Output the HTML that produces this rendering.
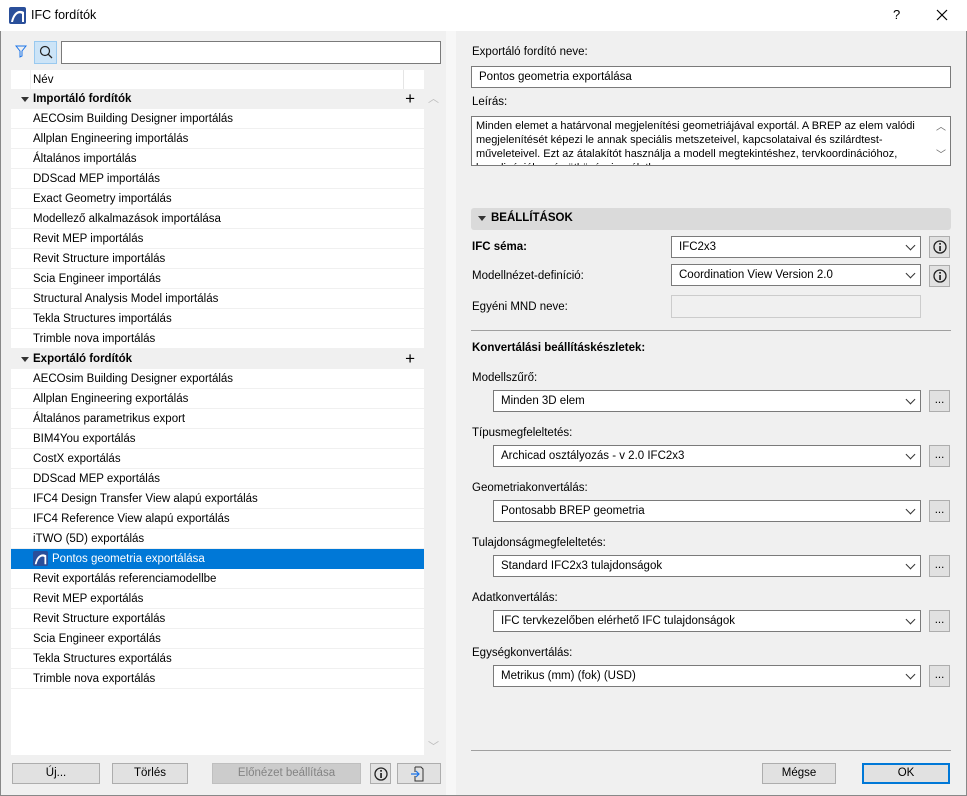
<!DOCTYPE html>
<html><head><meta charset="utf-8"><style>
*{box-sizing:border-box;margin:0;padding:0}
body{width:967px;height:796px;overflow:hidden;background:#f0f0f0;font-family:"Liberation Sans",sans-serif;font-size:11.5px;color:#000;position:relative}
.a{position:absolute}
.t{white-space:nowrap}
.row{position:absolute;left:11px;width:413px;height:20px;line-height:21px;padding-left:22px;border-bottom:1px solid #f0f0f0;white-space:nowrap}
.hdr{background:#f0f0f0;font-weight:bold;padding-left:22px}
.sel{background:#0078d7;color:#fff}
.box{position:absolute;background:#fff;border:1px solid #7a7a7a;height:22px;line-height:21px;padding-left:7px;white-space:nowrap}
.dd::after{content:"";position:absolute;right:6px;top:5px;width:6px;height:6px;border-right:1px solid #333;border-bottom:1px solid #333;transform:rotate(45deg)}
.btn{position:absolute;background:#e1e1e1;border:1px solid #adadad;height:21px;line-height:19px;text-align:center;white-space:nowrap}
.info{position:absolute;width:21px;height:22px;background:#e1e1e1;border:1px solid #adadad}
.info svg{position:absolute;left:3px;top:3px}
.plus{position:absolute;right:9px;top:3px;font-size:17px;font-weight:normal;line-height:14px}
.tri{display:inline-block;width:0;height:0;border-left:4px solid transparent;border-right:4px solid transparent;border-top:5px solid #333;position:absolute;left:10px;top:8px}
</style></head><body>
<div class="a" style="left:0;top:0;width:967px;height:31px;background:#fff"></div>
<svg class="a" style="left:9px;top:7px" width="17" height="17" viewBox="0 0 17 17"><rect width="17" height="17" rx="2" fill="#2a4f9a"/><path d="M2 15 C4 5 10 2 15 5 L15 15 L13 15 L13 7 C10 5 6 7 4 15Z" fill="#fff"/></svg>
<div class="a t" style="left:31px;top:8px;font-size:12.5px">IFC fordítók</div>
<div class="a t" style="left:893px;top:7px;font-size:13px">?</div>
<svg class="a" style="left:936px;top:9px" width="12" height="12"><path d="M1 1L11 11M11 1L1 11" stroke="#000" stroke-width="1.2"/></svg>
<div class="a" style="left:0;top:31px;width:1px;height:765px;background:#888"></div>
<div class="a" style="left:966px;top:31px;width:1px;height:765px;background:#888"></div>

<svg class="a" style="left:15px;top:45px" width="12" height="13"><path d="M1 1H11L7 6V11L5 12V6Z" fill="none" stroke="#1a73e8" stroke-width="1"/></svg>
<div class="a" style="left:34px;top:41px;width:23px;height:23px;background:#cce4f7;border:1px solid #99c9ef"></div>
<svg class="a" style="left:38px;top:44px" width="16" height="16"><circle cx="7" cy="7" r="4.5" fill="none" stroke="#222" stroke-width="1.2"/><path d="M10.3 10.3L14 14" stroke="#222" stroke-width="1.3"/></svg>
<div class="a" style="left:61px;top:41px;width:380px;height:23px;background:#fff;border:1px solid #7a7a7a"></div>

<div class="a" style="left:11px;top:70px;width:413px;height:685px;background:#fff"></div>
<div class="a" style="left:424px;top:70px;width:17px;height:685px;background:#f0f0f0"></div>
<div class="row" style="top:70px;padding-left:22px;border-bottom:none">Név</div>
<div class="a" style="left:30px;top:70px;width:1px;height:19px;background:#f0f0f0"></div>
<div class="a" style="left:403px;top:70px;width:1px;height:19px;background:#e5e5e5"></div>
<div class="a t" style="left:428px;top:90px;color:#bbb;font-size:11px">︿</div>
<div class="a t" style="left:428px;top:738px;color:#bbb;font-size:11px">﹀</div>

<div class="row hdr" style="top:89px"><span class="tri"></span>Importáló fordítók<span class="plus">+</span></div>
<div class="row" style="top:109px">AECOsim Building Designer importálás</div>
<div class="row" style="top:129px">Allplan Engineering importálás</div>
<div class="row" style="top:149px">Általános importálás</div>
<div class="row" style="top:169px">DDScad MEP importálás</div>
<div class="row" style="top:189px">Exact Geometry importálás</div>
<div class="row" style="top:209px">Modellező alkalmazások importálása</div>
<div class="row" style="top:229px">Revit MEP importálás</div>
<div class="row" style="top:249px">Revit Structure importálás</div>
<div class="row" style="top:269px">Scia Engineer importálás</div>
<div class="row" style="top:289px">Structural Analysis Model importálás</div>
<div class="row" style="top:309px">Tekla Structures importálás</div>
<div class="row" style="top:329px">Trimble nova importálás</div>
<div class="row hdr" style="top:349px"><span class="tri"></span>Exportáló fordítók<span class="plus">+</span></div>
<div class="row" style="top:369px">AECOsim Building Designer exportálás</div>
<div class="row" style="top:389px">Allplan Engineering exportálás</div>
<div class="row" style="top:409px">Általános parametrikus export</div>
<div class="row" style="top:429px">BIM4You exportálás</div>
<div class="row" style="top:449px">CostX exportálás</div>
<div class="row" style="top:469px">DDScad MEP exportálás</div>
<div class="row" style="top:489px">IFC4 Design Transfer View alapú exportálás</div>
<div class="row" style="top:509px">IFC4 Reference View alapú exportálás</div>
<div class="row" style="top:529px">iTWO (5D) exportálás</div>
<div class="row sel" style="top:549px;padding-left:41px;border-bottom:none">Pontos geometria exportálása</div>
<svg class="a" style="left:33px;top:551px" width="15" height="15" viewBox="0 0 17 17"><rect width="17" height="17" rx="2" fill="#2a4f9a"/><path d="M2 15 C4 5 10 2 15 5 L15 15 L13 15 L13 7 C10 5 6 7 4 15Z" fill="#fff"/></svg>
<div class="row" style="top:569px">Revit exportálás referenciamodellbe</div>
<div class="row" style="top:589px">Revit MEP exportálás</div>
<div class="row" style="top:609px">Revit Structure exportálás</div>
<div class="row" style="top:629px">Scia Engineer exportálás</div>
<div class="row" style="top:649px">Tekla Structures exportálás</div>
<div class="row" style="top:669px">Trimble nova exportálás</div>

<div class="btn" style="left:12px;top:763px;width:88px">Új...</div>
<div class="btn" style="left:112px;top:763px;width:76px">Törlés</div>
<div class="btn" style="left:212px;top:763px;width:149px;background:#cccccc;border-color:#bfbfbf;color:#838383">Előnézet beállítása</div>
<div class="info" style="left:370px;top:763px;height:21px"><svg width="14" height="14"><circle cx="7" cy="7" r="6" fill="none" stroke="#222" stroke-width="1.3"/><rect x="6.2" y="6" width="1.7" height="5" fill="#222"/><rect x="6.2" y="3" width="1.7" height="1.7" fill="#222"/></svg></div>
<div class="btn" style="left:397px;top:763px;width:44px"></div>
<svg class="a" style="left:410px;top:766px" width="16" height="16"><path d="M5 1H11L13 3V15H5V10M5 6V1" fill="none" stroke="#333"/><path d="M1 8H9M6 5L9 8L6 11" fill="none" stroke="#1a73e8" stroke-width="1.2"/></svg>

<div class="a" style="left:446px;top:31px;width:10px;height:765px;background:#f7f7f7"></div>

<div class="a t" style="left:472px;top:46px">Exportáló fordító neve:</div>
<div class="box" style="left:471px;top:66px;width:480px">Pontos geometria exportálása</div>
<div class="a t" style="left:472px;top:96px">Leírás:</div>
<div class="a" style="left:471px;top:116px;width:480px;height:50px;background:#fff;border:1px solid #7a7a7a;overflow:hidden;padding:2px 24px 0 4px;font-size:11px;line-height:14px">Minden elemet a határvonal megjelenítési geometriájával exportál. A BREP az elem valódi megjelenítését képezi le annak speciális metszeteivel, kapcsolataival és szilárdtest-műveleteivel. Ezt az átalakítót használja a modell megtekintéshez, tervkoordinációhoz, koordinációhoz és ütközésvizsgálathoz.</div>
<div class="a t" style="left:936px;top:118px;color:#666;font-size:10px">︿</div>
<div class="a t" style="left:936px;top:146px;color:#666;font-size:10px">﹀</div>

<div class="a" style="left:471px;top:208px;width:480px;height:22px;background:#dadada;border-radius:3px"></div>
<div class="a" style="left:478px;top:216px;width:0;height:0;border-left:4px solid transparent;border-right:4px solid transparent;border-top:5px solid #333"></div>
<div class="a t" style="left:491px;top:212px;font-weight:bold">BEÁLLÍTÁSOK</div>

<div class="a t" style="left:472px;top:241px;font-weight:bold">IFC séma:</div>
<div class="box dd" style="left:671px;top:236px;width:250px">IFC2x3</div>
<div class="info" style="left:929px;top:236px"><svg width="14" height="14"><circle cx="7" cy="7" r="6" fill="none" stroke="#222" stroke-width="1.3"/><rect x="6.2" y="6" width="1.7" height="5" fill="#222"/><rect x="6.2" y="3" width="1.7" height="1.7" fill="#222"/></svg></div>
<div class="a t" style="left:472px;top:270px">Modellnézet-definíció:</div>
<div class="box dd" style="left:671px;top:264px;width:250px">Coordination View Version 2.0</div>
<div class="info" style="left:929px;top:265px"><svg width="14" height="14"><circle cx="7" cy="7" r="6" fill="none" stroke="#222" stroke-width="1.3"/><rect x="6.2" y="6" width="1.7" height="5" fill="#222"/><rect x="6.2" y="3" width="1.7" height="1.7" fill="#222"/></svg></div>
<div class="a t" style="left:472px;top:301px">Egyéni MND neve:</div>
<div class="a" style="left:671px;top:295px;width:250px;height:23px;background:#f0f0f0;border:1px solid #ccc"></div>

<div class="a" style="left:471px;top:330px;width:480px;height:1px;background:#a0a0a0"></div>
<div class="a t" style="left:472px;top:342px;font-weight:bold">Konvertálási beállításkészletek:</div>

<div class="a t" style="left:472px;top:372px">Modellszűrő:</div>
<div class="box dd" style="left:493px;top:390px;width:428px">Minden 3D elem</div>
<div class="btn" style="left:929px;top:390px;width:21px;height:22px">...</div>
<div class="a t" style="left:472px;top:427px">Típusmegfeleltetés:</div>
<div class="box dd" style="left:493px;top:445px;width:428px">Archicad osztályozás - v 2.0 IFC2x3</div>
<div class="btn" style="left:929px;top:445px;width:21px;height:22px">...</div>
<div class="a t" style="left:472px;top:482px">Geometriakonvertálás:</div>
<div class="box dd" style="left:493px;top:500px;width:428px">Pontosabb BREP geometria</div>
<div class="btn" style="left:929px;top:500px;width:21px;height:22px">...</div>
<div class="a t" style="left:472px;top:537px">Tulajdonságmegfeleltetés:</div>
<div class="box dd" style="left:493px;top:555px;width:428px">Standard IFC2x3 tulajdonságok</div>
<div class="btn" style="left:929px;top:555px;width:21px;height:22px">...</div>
<div class="a t" style="left:472px;top:592px">Adatkonvertálás:</div>
<div class="box dd" style="left:493px;top:610px;width:428px">IFC tervkezelőben elérhető IFC tulajdonságok</div>
<div class="btn" style="left:929px;top:610px;width:21px;height:22px">...</div>
<div class="a t" style="left:472px;top:647px">Egységkonvertálás:</div>
<div class="box dd" style="left:493px;top:665px;width:428px">Metrikus (mm) (fok) (USD)</div>
<div class="btn" style="left:929px;top:665px;width:21px;height:22px">...</div>

<div class="a" style="left:471px;top:750px;width:480px;height:1px;background:#a0a0a0"></div>
<div class="btn" style="left:762px;top:763px;width:74px">Mégse</div>
<div class="btn" style="left:862px;top:763px;width:88px;border:2px solid #0078d7;line-height:17px">OK</div>
<div class="a" style="left:0;top:795px;width:967px;height:1px;background:#888"></div>
</body></html>
